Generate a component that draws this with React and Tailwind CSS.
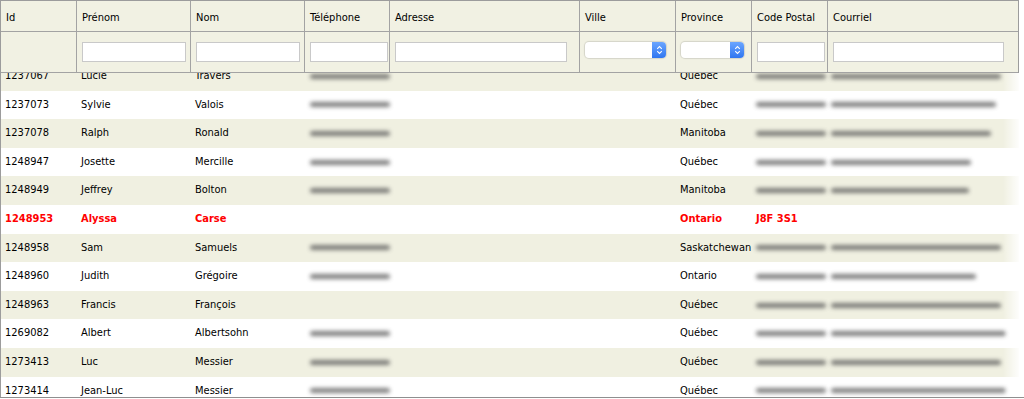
import React from "react";

const cols = [
  { key: "id", label: "Id", w: 77 },
  { key: "prenom", label: "Prénom", w: 114, input: 104 },
  { key: "nom", label: "Nom", w: 114, input: 104 },
  { key: "tel", label: "Téléphone", w: 85, input: 78 },
  { key: "adr", label: "Adresse", w: 190, input: 172 },
  { key: "ville", label: "Ville", w: 96, select: 81 },
  { key: "prov", label: "Province", w: 76, select: 63 },
  { key: "cp", label: "Code Postal", w: 76, input: 68 },
  { key: "mail", label: "Courriel", w: 190, input: 171 },
];

const rows = [
  ["1237067", "Lucie", "Travers", 80, "Québec", 70, 170],
  ["1237073", "Sylvie", "Valois", 80, "Québec", 70, 165],
  ["1237078", "Ralph", "Ronald", 80, "Manitoba", 70, 160],
  ["1248947", "Josette", "Mercille", 80, "Québec", 70, 140],
  ["1248949", "Jeffrey", "Bolton", 80, "Manitoba", 70, 138],
  ["1248953", "Alyssa", "Carse", 0, "Ontario", "J8F 3S1", 0, true],
  ["1248958", "Sam", "Samuels", 80, "Saskatchewan", 70, 170],
  ["1248960", "Judith", "Grégoire", 80, "Ontario", 70, 145],
  ["1248963", "Francis", "François", 0, "Québec", 70, 170],
  ["1269082", "Albert", "Albertsohn", 80, "Québec", 70, 175],
  ["1273413", "Luc", "Messier", 80, "Québec", 70, 170],
  ["1273414", "Jean-Luc", "Messier", 80, "Québec", 70, 175],
];

function Blur({ w }) {
  if (!w) return null;
  return (
    <div
      className="h-[5px] rounded-full bg-[#555] blur-[2px] opacity-75"
      style={{ width: w }}
    />
  );
}

function Select({ w }) {
  return (
    <div
      className="h-[16px] flex rounded-[4px] bg-white shadow-[0_0_1px_1px_rgba(0,0,0,0.12)] overflow-hidden"
      style={{ width: w }}
    >
      <div className="flex-1" />
      <div className="w-[14px] h-full bg-gradient-to-b from-[#6aa5ff] to-[#2f76f0] flex items-center justify-center">
        <svg width="7" height="10" viewBox="0 0 7 10" fill="none">
          <path d="M1.2 3.8 L3.5 1.6 L5.8 3.8" stroke="white" strokeWidth="1.1" />
          <path d="M1.2 6.2 L3.5 8.4 L5.8 6.2" stroke="white" strokeWidth="1.1" />
        </svg>
      </div>
    </div>
  );
}

export default function App() {
  return (
    <div
      className="w-[1024px] h-[398px] bg-white border-b border-[#8f8f8f] flex flex-col overflow-hidden text-[11px] text-black"
      style={{ fontFamily: '"DejaVu Sans Condensed", "DejaVu Sans", sans-serif' }}
    >
      {/* Header */}
      <div className="w-[1019px] border-l border-t border-r border-[#9c9c9c] bg-[#f1f1e3] flex flex-col shrink-0">
        <div className="flex h-[31px] border-b border-[#a3a3a3]">
          {cols.map((c, i) => (
            <div
              key={c.key}
              className={`pl-[5px] pt-[9px] ${i < cols.length - 1 ? "border-r border-[#a3a3a3]" : ""}`}
              style={{ width: i === 0 ? c.w - 1 : c.w }}
            >
              {c.label}
            </div>
          ))}
        </div>
        <div className="flex h-[41px] border-b border-[#a3a3a3]">
          {cols.map((c, i) => (
            <div
              key={c.key}
              className={`pl-[5px] pt-[10px] ${i < cols.length - 1 ? "border-r border-[#a3a3a3]" : ""}`}
              style={{ width: i === 0 ? c.w - 1 : c.w }}
            >
              {c.input && (
                <div
                  className="h-[20px] bg-white border border-[#c9c9c9]"
                  style={{ width: c.input }}
                />
              )}
              {c.select && <Select w={c.select} />}
            </div>
          ))}
        </div>
      </div>

      {/* Body */}
      <div className="relative flex-1 overflow-hidden w-[1019px] border-l border-[#9c9c9c]">
        <div className="-mt-[11px] flex flex-col">
          {rows.map((r, idx) => {
            const [id, pre, nom, tel, prov, cp, mail, hl] = r;
            const bg = idx % 2 === 0 ? "bg-[#f0f0e1]" : "bg-white";
            const txt = hl ? "text-[#f00] font-bold" : "";
            return (
              <div key={id} className={`flex items-center h-[28.6px] ${bg} ${txt}`}>
                <div className="w-[76px] pl-[4px]">{id}</div>
                <div className="w-[114px] pl-[4px]">{pre}</div>
                <div className="w-[114px] pl-[4px]">{nom}</div>
                <div className="w-[85px] pl-[5px]">
                  <Blur w={tel} />
                </div>
                <div className="w-[190px]" />
                <div className="w-[96px]" />
                <div className="w-[76px] pl-[4px] whitespace-nowrap">{prov}</div>
                <div className="w-[76px] pl-[4px]">
                  {typeof cp === "string" ? <span>{cp}</span> : <Blur w={cp} />}
                </div>
                <div className="w-[190px] pl-[3px]">
                  <Blur w={mail} />
                </div>
              </div>
            );
          })}
        </div>
        <div className="absolute right-0 top-0 bottom-0 w-[16px] bg-gradient-to-r from-transparent to-white/90" />
      </div>
    </div>
  );
}
